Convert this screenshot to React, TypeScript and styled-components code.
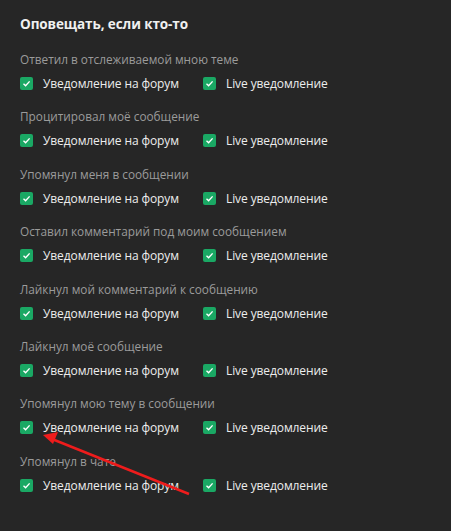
import styled, { createGlobalStyle } from 'styled-components';

const GlobalStyle = createGlobalStyle`
  html, body {
    margin: 0;
    padding: 0;
    background: #262626;
  }
`;

const Panel = styled.div`
  position: relative;
  width: 451px;
  height: 531px;
  box-sizing: border-box;
  padding: 14px 20px 0;
  background: #262626;
  font-family: "Open Sans", "Liberation Sans", sans-serif;
  overflow: hidden;
`;

const Title = styled.h3`
  margin: 0 0 17px;
  font-size: 13.5px;
  line-height: 20px;
  font-weight: 700;
  letter-spacing: -0.1px;
  color: #f0f0f0;
`;

const Sections = styled.div`
  display: flex;
  flex-direction: column;
  gap: 17.4px;
`;

const Section = styled.div`
  display: flex;
  flex-direction: column;
  gap: 9px;
`;

const Label = styled.div`
  font-size: 11.8px;
  line-height: 16px;
  color: #9b9b9b;
`;

const Options = styled.div`
  display: grid;
  grid-template-columns: 183px auto;
`;

const Option = styled.label`
  display: flex;
  align-items: center;
  gap: 10px;
  height: 15px;
  font-size: 12px;
  letter-spacing: -0.1px;
  color: #ededed;
`;

const Box = styled.span`
  width: 13px;
  height: 13px;
  border-radius: 2px;
  background: #1aa864;
  display: flex;
  align-items: center;
  justify-content: center;
`;

const Arrow = styled.svg`
  position: absolute;
  left: 0;
  top: 0;
  pointer-events: none;
`;

const Check = () => (
  <Box>
    <svg width="9" height="9" viewBox="0 0 9 9">
      <path d="M1.5 4.8 L3.6 6.8 L7.6 2.4" fill="none" stroke="#fff" strokeWidth="1.4" />
    </svg>
  </Box>
);

const sections = [
  'Ответил в отслеживаемой мною теме',
  'Процитировал моё сообщение',
  'Упомянул меня в сообщении',
  'Оставил комментарий под моим сообщением',
  'Лайкнул мой комментарий к сообщению',
  'Лайкнул моё сообщение',
  'Упомянул мою тему в сообщении',
  'Упомянул в чате',
];

export default function App() {
  return (
    <>
      <GlobalStyle />
      <Panel>
        <Title>Оповещать, если кто-то</Title>
        <Sections>
          {sections.map((s) => (
            <Section key={s}>
              <Label>{s}</Label>
              <Options>
                <Option>
                  <Check />
                  Уведомление на форум
                </Option>
                <Option>
                  <Check />
                  Live уведомление
                </Option>
              </Options>
            </Section>
          ))}
        </Sections>
        <Arrow width="451" height="531" viewBox="0 0 451 531">
          <line x1="189" y1="494" x2="52" y2="439" stroke="#ee1c1c" strokeWidth="2.5" />
          <polygon points="43,435 58,432 53,444" fill="#ee1c1c" />
        </Arrow>
      </Panel>
    </>
  );
}
